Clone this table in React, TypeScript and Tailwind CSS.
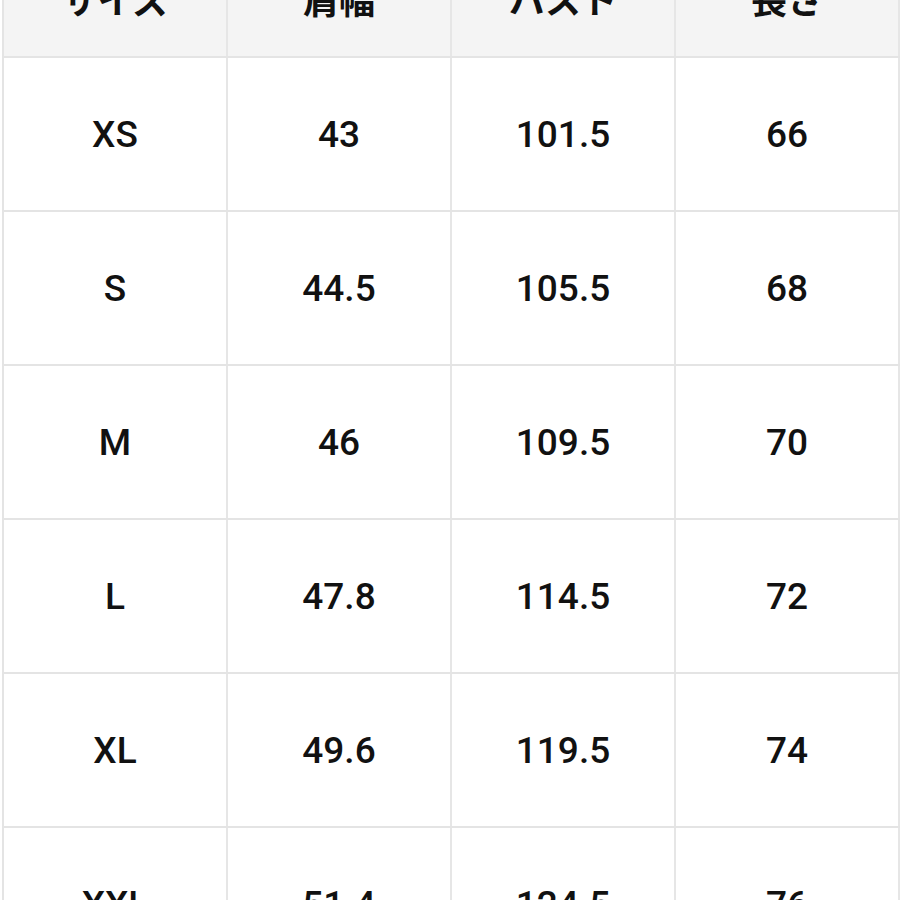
import React from 'react';

const headers = ['サイズ', '肩幅', 'バスト', '長さ'];

const rows = [
  ['XS', '43', '101.5', '66'],
  ['S', '44.5', '105.5', '68'],
  ['M', '46', '109.5', '70'],
  ['L', '47.8', '114.5', '72'],
  ['XL', '49.6', '119.5', '74'],
  ['XXL', '51.4', '124.5', '76'],
];

export default function App() {
  return (
    <div
      className="w-[900px] h-[900px] overflow-hidden bg-white text-[#111]"
      style={{ fontFamily: 'Roboto, "Liberation Sans", "Noto Sans CJK JP", sans-serif' }}
    >
      <div className="ml-[2px] w-[898px] border-l-2 border-[#e4e4e4]">
        {/* Header (top cut off) */}
        <div className="grid grid-cols-4 h-[58px] bg-[#f4f4f4] border-b-2 border-[#e4e4e4]">
          {headers.map((h) => (
            <div
              key={h}
              className="flex items-end justify-center overflow-hidden border-r-2 border-[#e6e6e6] pb-[40px]"
            >
              <span
                className="text-[36px] leading-none font-bold"
                style={{ fontFamily: '"Noto Sans CJK JP", sans-serif' }}
              >
                {h}
              </span>
            </div>
          ))}
        </div>

        {/* Rows */}
        {rows.map((row) => (
          <div key={row[0]} className="grid grid-cols-4 h-[154px] border-b-2 border-[#e4e4e4]">
            {row.map((cell, i) => (
              <div
                key={i}
                className="flex items-center justify-center border-r-2 border-[#e6e6e6]"
              >
                <span className="text-[37px] leading-none font-medium">{cell}</span>
              </div>
            ))}
          </div>
        ))}
      </div>
    </div>
  );
}
